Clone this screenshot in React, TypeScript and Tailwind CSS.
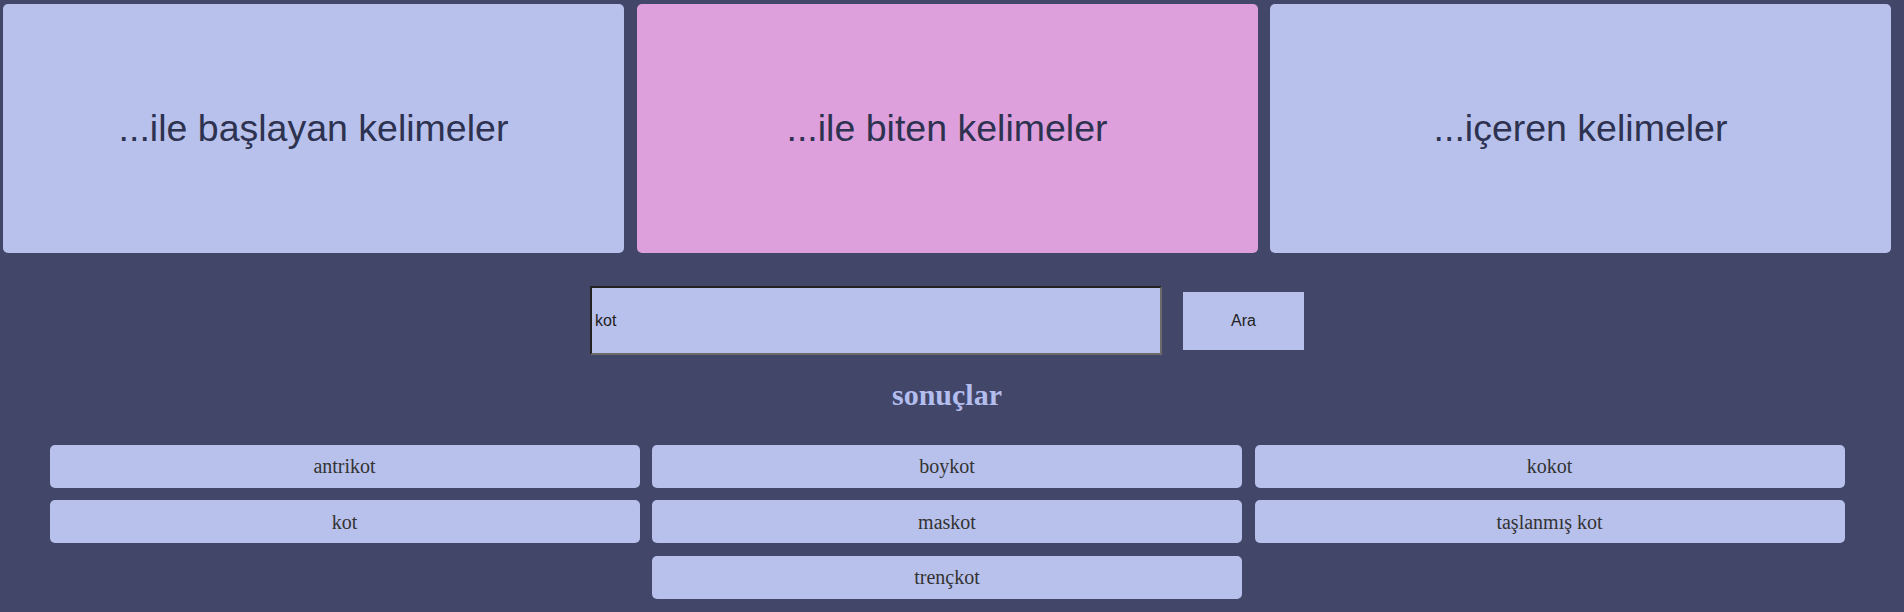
import { useState } from "react";

const modes = [
  "...ile başlayan kelimeler",
  "...ile biten kelimeler",
  "...içeren kelimeler",
];

const results = [
  "antrikot",
  "boykot",
  "kokot",
  "kot",
  "maskot",
  "taşlanmış kot",
  "trençkot",
];

export default function App() {
  const [active, setActive] = useState(1);
  const [query, setQuery] = useState("kot");

  return (
    <div className="min-h-[612px] bg-[#424769] text-[#2d3250] font-['Liberation_Serif',serif]">
      <div className="w-[1894px]">
        <div className="flex gap-[12.5px] pl-[3px] pt-[4px]">
          {modes.map((m, i) => (
            <button
              key={m}
              onClick={() => setActive(i)}
              className={`w-[621px] h-[249px] rounded-[5px] flex items-center justify-center font-['Liberation_Sans',Arial,sans-serif] text-[37.5px] ${
                i === active ? "bg-[#dda0dd]" : "bg-[#b8c1ec]"
              }`}
            >
              {m}
            </button>
          ))}
        </div>

        <div className="mt-[33px] flex items-center justify-center gap-[21px]">
          <input
            value={query}
            onChange={(e) => setQuery(e.target.value)}
            className="w-[572px] h-[69px] bg-[#b8c1ec] border-2 border-solid border-t-[#222] border-l-[#222] border-b-[#6b6b6b] border-r-[#6b6b6b] pl-[3px] font-['Liberation_Sans',Arial,sans-serif] text-[16px] text-[#222] outline-none"
          />
          <button className="w-[121px] h-[58px] bg-[#b8c1ec] font-['Liberation_Sans',Arial,sans-serif] text-[16px] text-[#222]">
            Ara
          </button>
        </div>

        <h2 className="mt-[23px] text-center text-[30px] font-bold leading-[1.15] text-[#b3bdee]">
          sonuçlar
        </h2>

        <div className="mx-auto mt-[32px] w-[1795px] flex flex-wrap justify-center gap-x-[12.5px] gap-y-[12.5px]">
          {results.map((r) => (
            <div
              key={r}
              className="w-[590px] h-[43px] rounded-[5px] bg-[#b8c1ec] flex items-center justify-center text-[20px] text-[#333]"
            >
              {r}
            </div>
          ))}
        </div>
      </div>
    </div>
  );
}
